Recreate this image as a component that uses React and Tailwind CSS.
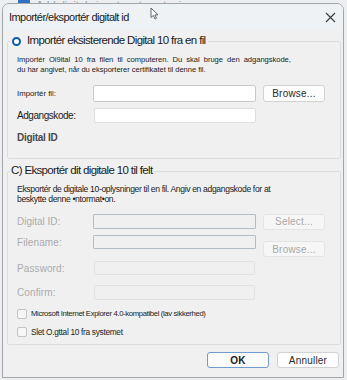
export default function App() {
  const Btn = ({ children, disabled, primary, className = "" }) => (
    <div
      className={
        "flex h-[16px] w-[62px] items-center justify-center rounded-[3px] border text-[10px] tracking-[0.2px] " +
        (disabled
          ? "border-[#e4e4e4] bg-[#f6f6f6] text-[#a8a8a8] "
          : primary
          ? "border-[#6f9bd1] bg-[#fbfbfb] text-[#1b1b1b] "
          : "border-[#d2d2d2] bg-[#fdfdfd] text-[#2b2b2b] ") +
        className
      }
    >
      {children}
    </div>
  );

  return (
    <div className="relative h-[380px] w-[347px] overflow-hidden bg-[#eceef0] font-['Liberation_Sans',Arial,sans-serif]">
      {/* background strip */}
      <div className="flex h-[3px] items-end gap-[6px] overflow-hidden pl-[18px]">
        <div className="mb-[-6px] h-[10px] w-[12px] shrink-0 rounded-[2px] bg-[#2f6fc4]" />
        <div className="mb-[-7px] text-[11px] leading-[10px] text-[#9aa0a6]">
          Add digital signature to outgoing messages
        </div>
      </div>

      {/* window */}
      <div className="ml-[2px] flex h-[375px] w-[342px] flex-col overflow-hidden rounded-t-[7px] border border-[#a2a6ab] bg-[#f0f0f0]">
        {/* title bar */}
        <div className="flex h-[26px] shrink-0 items-center justify-between bg-[#eef2f4] pl-[6px] pr-[6px]">
          <span className="pt-[1px] text-[11px] tracking-[-0.55px] text-[#1b1b1b]">Importér/eksportér digitalt id</span>
          <svg width="11" height="11" viewBox="0 0 11 11" className="mr-[1px]">
            <path d="M1 1 L10 10 M10 1 L1 10" stroke="#3a3a3a" strokeWidth="1.1" fill="none" />
          </svg>
        </div>

        {/* group 1 */}
        <fieldset className="ml-[4px] mr-[2px] mt-[3px] rounded-[2px] border border-[#dcdcdc] px-[2px] pb-[13px]">
          <legend className="flex h-[16px] items-center gap-[6px] px-[2px]">
            <span className="h-[9px] w-[9px] rounded-full border-[2.5px] border-[#0b5cad] bg-white" />
            <span className="text-[11.5px] tracking-[-0.65px] text-[#1b1b1b]">
              Importér eksisterende Digital 10 fra en fil
            </span>
          </legend>
          <div className="pl-[7px]">
            <div className="mt-[6px] text-[7.6px] leading-[10px] tracking-[-0.05px] text-[#1b1b1b]">
              <div>Importér&nbsp; Oi9ital&nbsp; 10&nbsp; fra&nbsp; filen&nbsp; til&nbsp; computeren.&nbsp; Du&nbsp; skal&nbsp; bruge&nbsp; den&nbsp; adgangskode,</div>
              <div>du har angivet, når du eksporterer certifikatet til denne fil.</div>
            </div>
            <div className="mt-[10px] flex h-[17px] items-center">
              <span className="w-[76px] text-[7.8px] text-[#1b1b1b]">Importér fil:</span>
              <div className="h-[17px] w-[163px] rounded-[2px] border border-[#c9c9c9] bg-white" />
              <Btn className="ml-[7px] h-[17px]">Browse...</Btn>
            </div>
            <div className="mt-[6px] flex h-[15px] items-center">
              <span className="w-[77px] text-[10px] tracking-[-0.45px] text-[#1b1b1b]">Adgangskode:</span>
              <div className="h-[15px] w-[162px] rounded-[2px] border border-[#dedede] bg-white" />
            </div>
            <div className="mt-[8px] text-[10px] font-bold leading-[14px] tracking-[-0.3px] text-[#4a4a4a]">Digital ID</div>
          </div>
        </fieldset>

        {/* group 2 */}
        <fieldset className="ml-[4px] mr-[2px] mt-[4px] rounded-[2px] border border-[#dcdcdc] px-[2px] pb-[7px]">
          <legend className="flex h-[16px] items-center px-[1px]">
            <span className="text-[11.5px] tracking-[-0.65px] text-[#1b1b1b]">C) Eksportér dit digitale 10 til felt</span>
          </legend>
          <div className="pl-[7px]">
            <div className="mt-[6px] text-[8.6px] leading-[9.5px] tracking-[-0.35px] text-[#1b1b1b]">
              <div>Eksportér de digitale 10-oplysninger til en fil. Angiv en adgangskode for at</div>
              <div>beskytte denne •ntormat•on.</div>
            </div>
            <div className="mt-[10px] flex h-[15px] items-center">
              <span className="w-[76px] text-[10px] text-[#ababab]">Digital ID:</span>
              <div className="h-[15px] w-[163px] rounded-[1px] border-[1.5px] border-[#b4bcc6] bg-[#f0f0f0]" />
              <Btn disabled className="ml-[7px] h-[15px]">Select...</Btn>
            </div>
            <div className="mt-[6px] flex items-start">
              <span className="flex h-[14px] w-[76px] items-center text-[10px] tracking-[0.1px] text-[#ababab]">Filename:</span>
              <div className="h-[14px] w-[163px] rounded-[1px] border-[1.5px] border-[#b4bcc6] bg-[#f0f0f0]" />
              <Btn disabled className="ml-[7px] mt-[6px] h-[14px]">Browse...</Btn>
            </div>
            <div className="mt-[4px] flex h-[14px] items-center">
              <span className="w-[77px] text-[10px] tracking-[0.1px] text-[#ababab]">Password:</span>
              <div className="h-[14px] w-[161px] rounded-[2px] border border-[#e2e2e2] bg-[#f0f0f0]" />
            </div>
            <div className="mt-[10px] flex h-[15px] items-center">
              <span className="w-[77px] text-[10px] tracking-[0.1px] text-[#ababab]">Confirm:</span>
              <div className="h-[15px] w-[161px] rounded-[2px] border border-[#e2e2e2] bg-[#f0f0f0]" />
            </div>
            <div className="mt-[9px] flex h-[10px] items-center gap-[4px]">
              <span className="h-[10px] w-[10px] rounded-[2px] border border-[#c4c4c4] bg-[#f6f6f6]" />
              <span className="text-[7.7px] tracking-[-0.35px] text-[#1b1b1b]">
                Microsoft Internet Explorer 4.0-kompatibel (lav sikkerhed)
              </span>
            </div>
            <div className="mt-[8px] flex h-[10px] items-center gap-[4px]">
              <span className="h-[10px] w-[10px] rounded-[2px] border border-[#c4c4c4] bg-[#f6f6f6]" />
              <span className="text-[8.3px] tracking-[-0.3px] text-[#1b1b1b]">Slet O.gttal 10 fra systemet</span>
            </div>
          </div>
        </fieldset>

        {/* buttons */}
        <div className="mr-[4px] mt-[7px] flex justify-end gap-[8px]">
          <Btn primary className="w-[61px] border-[1.5px] font-bold">OK</Btn>
          <Btn className="w-[60px]">Annuller</Btn>
        </div>
      </div>

      {/* cursor */}
      <svg className="absolute left-[150px] top-[7px]" width="9" height="13" viewBox="0 0 9 13">
        <path d="M1 1 L1 10.5 L3.3 8.4 L5 12 L6.5 11.3 L4.9 7.9 L8 7.8 Z" fill="#ffffff" stroke="#555" strokeWidth="0.9" strokeLinejoin="round" />
      </svg>
    </div>
  );
}
